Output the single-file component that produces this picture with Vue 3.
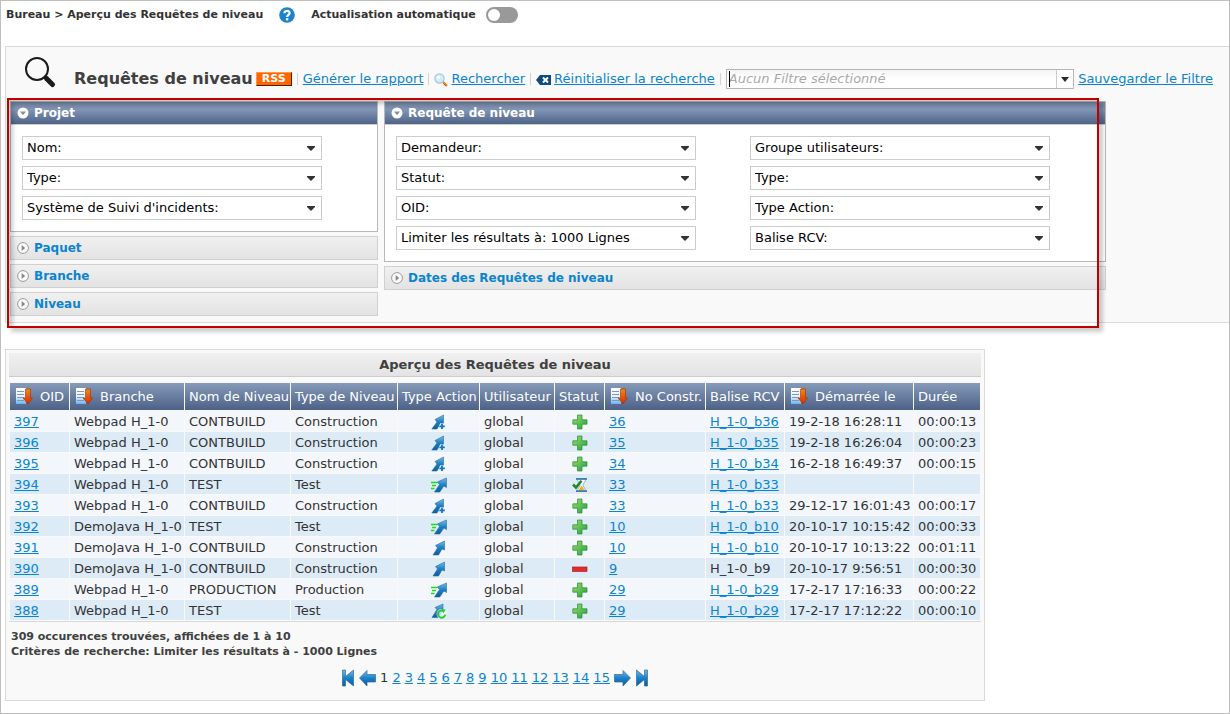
<script setup>
import { ref } from 'vue'

const autoRefresh = ref(false)
const filterName = ref('')

const projectFields = ['Nom:', 'Type:', "Système de Suivi d'incidents:"]
const requestFields = [
  'Demandeur:', 'Groupe utilisateurs:',
  'Statut:', 'Type:',
  'OID:', 'Type Action:',
  'Limiter les résultats à: 1000 Lignes', 'Balise RCV:'
]
const leftSections = ['Paquet', 'Branche', 'Niveau']

const columns = [
  { key: 'oid', label: 'OID', sort: true },
  { key: 'branch', label: 'Branche', sort: true },
  { key: 'level', label: 'Nom de Niveau' },
  { key: 'kind', label: 'Type de Niveau' },
  { key: 'action', label: 'Type Action' },
  { key: 'user', label: 'Utilisateur' },
  { key: 'status', label: 'Statut' },
  { key: 'build', label: 'No Constr.', sort: true },
  { key: 'tag', label: 'Balise RCV' },
  { key: 'start', label: 'Démarrée le', sort: true },
  { key: 'time', label: 'Durée' }
]

const rows = [
  [397, 'Webpad H_1-0', 'CONTBUILD', 'Construction', 'plus', 'ok', 36, 'H_1-0_b36', '19-2-18 16:28:11', '00:00:13'],
  [396, 'Webpad H_1-0', 'CONTBUILD', 'Construction', 'plus', 'ok', 35, 'H_1-0_b35', '19-2-18 16:26:04', '00:00:23'],
  [395, 'Webpad H_1-0', 'CONTBUILD', 'Construction', 'plus', 'ok', 34, 'H_1-0_b34', '16-2-18 16:49:37', '00:00:15'],
  [394, 'Webpad H_1-0', 'TEST', 'Test', 'fast', 'wait', 33, 'H_1-0_b33', '', ''],
  [393, 'Webpad H_1-0', 'CONTBUILD', 'Construction', 'plus', 'ok', 33, 'H_1-0_b33', '29-12-17 16:01:43', '00:00:17'],
  [392, 'DemoJava H_1-0', 'TEST', 'Test', 'fast', 'ok', 10, 'H_1-0_b10', '20-10-17 10:15:42', '00:00:33'],
  [391, 'DemoJava H_1-0', 'CONTBUILD', 'Construction', 'none', 'ok', 10, 'H_1-0_b10', '20-10-17 10:13:22', '00:01:11'],
  [390, 'DemoJava H_1-0', 'CONTBUILD', 'Construction', 'none', 'fail', 9, 'H_1-0_b9', '20-10-17 9:56:51', '00:00:30'],
  [389, 'Webpad H_1-0', 'PRODUCTION', 'Production', 'fast', 'ok', 29, 'H_1-0_b29', '17-2-17 17:16:33', '00:00:22'],
  [388, 'Webpad H_1-0', 'TEST', 'Test', 'redo', 'ok', 29, 'H_1-0_b29', '17-2-17 17:12:22', '00:00:10']
].map(([oid, branch, level, kind, action, status, build, tag, start, time]) => ({
  oid, branch, level, kind, action, status, build, tag, start, time, tagLink: status !== 'fail'
}))

const otherPages = Array.from({ length: 14 }, (_, i) => i + 2)
</script>

<template>
  <div class="page">
    <svg class="defs" width="0" height="0" aria-hidden="true">
      <defs>
        <linearGradient id="blue" x1="0" y1="0" x2="0" y2="1">
          <stop offset="0" stop-color="#7cb9e2" /><stop offset="0.5" stop-color="#1a80c6" /><stop offset="1" stop-color="#0d5c9e" />
        </linearGradient>
        <linearGradient id="green" x1="0" y1="0" x2="1" y2="1">
          <stop offset="0" stop-color="#a6d96a" /><stop offset="1" stop-color="#17a63e" />
        </linearGradient>
        <linearGradient id="orange" x1="0" y1="0" x2="0" y2="1">
          <stop offset="0" stop-color="#f08a12" /><stop offset="1" stop-color="#d92a05" />
        </linearGradient>
        <linearGradient id="sheet" x1="0" y1="0" x2="0" y2="1">
          <stop offset="0" stop-color="#ffffff" /><stop offset="0.55" stop-color="#e4f1fd" /><stop offset="1" stop-color="#62b4f4" />
        </linearGradient>
      </defs>
    </svg>

    <header class="topbar">
      <span>Bureau &gt; Aperçu des Requêtes de niveau</span>
      <svg class="help" width="16" height="16" viewBox="0 0 16 16" role="img" aria-label="Aide">
        <circle cx="8" cy="8" r="7.8" fill="#1c82cb" />
        <path d="M5.4 6.2C5.4 3 10.8 3 10.6 6.1 10.5 7.9 8.1 8 8.1 10" fill="none" stroke="#fff" stroke-width="2.2" />
        <rect x="6.9" y="11.2" width="2.4" height="2.2" fill="#fff" />
      </svg>
      <label class="auto">Actualisation automatique
        <input v-model="autoRefresh" class="switch" type="checkbox">
      </label>
    </header>

    <section class="search">
      <div class="heading">
        <svg class="glass" width="32" height="32" viewBox="0 0 32 32" aria-hidden="true">
          <circle cx="12" cy="12" r="11" fill="none" stroke="#1d1b19" stroke-width="2" />
          <path d="M19 19.5L23 23" stroke="#1d1b19" stroke-width="3" />
          <path d="M21.5 21.5L27.5 27.5" stroke="#1d1b19" stroke-width="5" stroke-linecap="round" />
        </svg>
        <h1>Requêtes de niveau</h1>
        <a class="rss" href="#">RSS</a>
        <i class="bar"></i>
        <a href="#">Générer le rapport</a>
        <i class="bar"></i>
        <a class="withicon" href="#">
          <svg width="14" height="14" viewBox="0 0 14 14" aria-hidden="true">
            <path d="M8.5 8.5L13 13" stroke="#f08a1a" stroke-width="2.4" />
            <path d="M9.5 10.5L12 13" stroke="#c8451a" stroke-width="1" />
            <circle cx="5.5" cy="5.5" r="4.6" fill="#d3ecfa" stroke="#9fc6e0" stroke-width="1.2" />
            <circle cx="4.4" cy="4.2" r="1.8" fill="#fff" />
          </svg>Rechercher</a>
        <i class="bar"></i>
        <a class="withicon" href="#">
          <svg width="15" height="14" viewBox="0 0 15 14" aria-hidden="true">
            <path d="M0 7L4 2H15V12H4Z" fill="#0f4a80" />
            <path d="M7 4.5L12 9.5M12 4.5L7 9.5" stroke="#fff" stroke-width="2" />
          </svg>Réinitialiser la recherche</a>
        <i class="bar"></i>
        <div class="combo">
          <input v-model="filterName" type="text" placeholder="Aucun Filtre sélectionné" aria-label="Filtre">
          <i class="caret"></i>
          <button type="button" aria-label="Ouvrir la liste des filtres">
            <svg width="8" height="5" viewBox="0 0 8 5"><path d="M0 0H8L4 5Z" fill="#2b2b2b" /></svg>
          </button>
        </div>
        <a class="save" href="#">Sauvegarder le Filtre</a>
      </div>

      <div class="criteria">
        <div class="stack">
          <section class="panel">
            <h2><button type="button" class="open">
              <svg width="12" height="12" viewBox="0 0 12 12" aria-hidden="true"><circle cx="6" cy="6" r="5.5" fill="#fff" /><path d="M3 4.5H9L6 8.3Z" fill="#8a8f98" /></svg>Projet</button></h2>
            <div class="fields">
              <div v-for="f in projectFields" :key="f" class="field">
                <select :aria-label="f"><option>{{ f }}</option></select>
                <svg width="8" height="5" viewBox="0 0 8 5" aria-hidden="true"><path d="M0 0H8V1L4 5L0 1Z" fill="#333" /></svg>
              </div>
            </div>
          </section>
          <button v-for="s in leftSections" :key="s" type="button" class="closed">
            <svg width="12" height="12" viewBox="0 0 12 12" aria-hidden="true"><circle cx="6" cy="6" r="5.4" fill="#fafafa" stroke="#999" /><path d="M4.6 3L8.2 6L4.6 9Z" fill="#888" /></svg>{{ s }}
          </button>
        </div>
        <div class="stack">
          <section class="panel">
            <h2><button type="button" class="open">
              <svg width="12" height="12" viewBox="0 0 12 12" aria-hidden="true"><circle cx="6" cy="6" r="5.5" fill="#fff" /><path d="M3 4.5H9L6 8.3Z" fill="#8a8f98" /></svg>Requête de niveau</button></h2>
            <div class="fields two">
              <div v-for="f in requestFields" :key="f" class="field">
                <select :aria-label="f"><option>{{ f }}</option></select>
                <svg width="8" height="5" viewBox="0 0 8 5" aria-hidden="true"><path d="M0 0H8V1L4 5L0 1Z" fill="#333" /></svg>
              </div>
            </div>
          </section>
          <button type="button" class="closed">
            <svg width="12" height="12" viewBox="0 0 12 12" aria-hidden="true"><circle cx="6" cy="6" r="5.4" fill="#fafafa" stroke="#999" /><path d="M4.6 3L8.2 6L4.6 9Z" fill="#888" /></svg>Dates des Requêtes de niveau
          </button>
        </div>
        <div class="highlight"></div>
      </div>
    </section>

    <section class="results">
      <h2 class="caption">Aperçu des Requêtes de niveau</h2>
      <table>
        <colgroup><col v-for="c in columns" :key="c.key" :class="'c-' + c.key"></colgroup>
        <thead>
          <tr>
            <th v-for="c in columns" :key="c.key" scope="col">
              <div class="th">
                <svg v-if="c.sort" width="17" height="17" viewBox="0 0 17 17" aria-hidden="true">
                  <rect width="10" height="16" fill="url(#sheet)" />
                  <path d="M1 3.5H8M1 6.5H8M1 9.5H8M1 12.5H8" stroke="#8097b8" />
                  <path d="M9.5 1H14.5V10H16.5L12 16L7 10H9.5Z" fill="url(#orange)" stroke="#9c3205" stroke-width="0.6" />
                </svg>{{ c.label }}
              </div>
            </th>
          </tr>
        </thead>
        <tbody>
          <tr v-for="r in rows" :key="r.oid">
            <td><a href="#">{{ r.oid }}</a></td>
            <td>{{ r.branch }}</td>
            <td>{{ r.level }}</td>
            <td>{{ r.kind }}</td>
            <td class="icon">
              <svg width="16" height="16" viewBox="0 0 16 16" role="img" :aria-label="r.action">
                <g v-if="r.action === 'fast'">
                  <path d="M3.5 15L8.5 7.5L6.2 5L15.5 1V10.5L12.8 9L8.8 15Z" fill="url(#blue)" stroke="#2d6ca5" stroke-width="0.6" />
                  <path d="M0 5.5H6M1 8.5H5M0 11.5H3.5" stroke="#22d822" stroke-width="1.5" />
                </g>
                <g v-else-if="r.action === 'redo'">
                  <path d="M1 14.5L6 6.5L4 4.5L12 1V8L7 14.5Z" fill="url(#blue)" stroke="#2d6ca5" stroke-width="0.6" />
                  <circle cx="10.5" cy="11" r="5" fill="#fff" opacity="0.7" />
                  <path d="M12.5 8A3.6 3.6 0 1 0 14.2 11.5" fill="none" stroke="#25cc35" stroke-width="2" />
                  <path d="M10.5 6L14.5 6.5L12.5 10.5Z" fill="#25cc35" />
                </g>
                <g v-else-if="r.action === 'plus'">
                  <path d="M0.8 15L6 8L4 5.5L12.5 1V9.5L9.5 9L6 15Z" fill="url(#blue)" stroke="#2d6ca5" stroke-width="0.6" />
                  <path d="M11 9V15.4M8 12.2H14.2" stroke="#e6f0f9" stroke-width="3" />
                  <path d="M11 9.6V15M8.4 12.3H13.8" stroke="#1774bb" stroke-width="1.8" />
                </g>
                <path v-else d="M2 15L6.5 8L4.5 5.5L13.5 1V10L11 9L7.5 15Z" fill="url(#blue)" stroke="#2d6ca5" stroke-width="0.6" />
              </svg>
            </td>
            <td>global</td>
            <td class="icon">
              <svg width="16" height="16" viewBox="0 0 16 16" role="img" :aria-label="r.status">
                <path v-if="r.status === 'ok'" d="M5.5 1H10V5.8H15V10.2H10V15H5.5V10.2H0.8V5.8H5.5Z" fill="url(#green)" stroke="#2a8a38" stroke-width="0.7" />
                <rect v-else-if="r.status === 'fail'" x="0.5" y="6" width="14.5" height="4.4" fill="#e52a2a" stroke="#a82020" stroke-width="0.7" />
                <g v-else>
                  <path d="M5 2.5H14L10.8 8L14 14H5L8.2 8Z" fill="#f7faff" stroke="#8ba6bf" stroke-width="0.8" />
                  <path d="M9.6 8.4L12.6 13.2H6.6Z" fill="#f5ab1c" />
                  <path d="M4 1.8H15M4 14.2H15" stroke="#3f7fa8" stroke-width="1.7" />
                  <path d="M1 7.5L4 10.5L9.5 3.8" fill="none" stroke="#25862c" stroke-width="2.6" />
                </g>
              </svg>
            </td>
            <td><a href="#">{{ r.build }}</a></td>
            <td><a v-if="r.tagLink" href="#">{{ r.tag }}</a><template v-else>{{ r.tag }}</template></td>
            <td>{{ r.start }}</td>
            <td>{{ r.time }}</td>
          </tr>
        </tbody>
      </table>
      <p class="summary">309 occurences trouvées, affichées de 1 à 10<br>Critères de recherche: Limiter les résultats à - 1000 Lignes</p>
      <nav class="pager" aria-label="Pages">
        <a class="first" href="#" aria-label="Première page">
          <svg width="12" height="18" viewBox="0 0 12 18"><path d="M0.5 1H3.5V7.5L11.5 1V17L3.5 10.5V17H0.5Z" fill="url(#blue)" stroke="#2d6ca5" stroke-width="0.7" /></svg>
        </a>
        <a class="prev" href="#" aria-label="Page précédente">
          <svg width="17" height="18" viewBox="0 0 17 18"><path d="M0.5 9L8 1.5V5.5H16.5V13H8V17Z" fill="url(#blue)" stroke="#2d6ca5" stroke-width="0.7" /></svg>
        </a>
        <span>1</span>
        <a v-for="p in otherPages" :key="p" href="#">{{ p }}</a>
        <a class="next" href="#" aria-label="Page suivante">
          <svg width="17" height="18" viewBox="0 0 17 18"><path d="M16.5 9L9 1.5V5.5H0.5V13H9V17Z" fill="url(#blue)" stroke="#2d6ca5" stroke-width="0.7" /></svg>
        </a>
        <a class="last" href="#" aria-label="Dernière page">
          <svg width="12" height="18" viewBox="0 0 12 18"><path d="M11.5 1H8.5V7.5L0.5 1V17L8.5 10.5V17H11.5Z" fill="url(#blue)" stroke="#2d6ca5" stroke-width="0.7" /></svg>
        </a>
      </nav>
    </section>
  </div>
</template>

<style>
body { margin: 0; background: #fff; }
</style>

<style scoped>
.page {
  box-sizing: border-box;
  min-height: 100vh;
  padding-left: 4px;
  border: 1px solid #bfbfbf;
  font: 13px/16px Verdana, "DejaVu Sans", sans-serif;
  color: #333;
}
.defs { display: block; }
a { color: #0a84d0; }
button { font: inherit; cursor: pointer; }

.topbar {
  display: flex;
  align-items: center;
  height: 27px;
  padding-left: 1px;
  font-size: 11px;
  font-weight: bold;
}
.help { margin-left: 16px; }
.auto { display: flex; align-items: center; gap: 10px; margin-left: 16px; }
.switch {
  appearance: none;
  display: flex;
  width: 32px;
  height: 16px;
  margin: 0;
  border-radius: 8px;
  background: #999;
}
.switch::before {
  content: "";
  width: 12px;
  height: 12px;
  margin: 2px;
  border-radius: 50%;
  background: #fff;
}
.switch:checked { justify-content: flex-end; background: #1c82cb; }

.search {
  margin-top: 18px;
  padding: 0 4px 6px;
  border: 1px solid #d9d9d9;
  border-right: 0;
  background: #f9f9f9;
}
.heading {
  display: flex;
  align-items: center;
  height: 44px;
  padding: 10px 12px 0 15px;
  white-space: nowrap;
}
.heading > * { flex: none; }
.glass { align-self: flex-start; }
.heading h1 { margin: 0 3px 0 17px; font-size: 16px; line-height: 22px; color: #404040; }
.rss {
  box-sizing: border-box;
  width: 36px;
  height: 14px;
  border: 1px solid;
  border-color: #ff9a4d #4a2000 #4a2000 #ff9a4d;
  background: #ff6600;
  color: #fff;
  font-size: 11px;
  font-weight: bold;
  line-height: 12px;
  text-align: center;
  text-decoration: none;
}
.bar { width: 1px; height: 12px; margin: 0 5px; background: #d8d0d8; }
.withicon svg { margin-right: 3px; vertical-align: -4px; }
.heading > .combo {
  position: relative;
  box-sizing: border-box;
  display: flex;
  flex: 1 1 0;
  max-width: 350px;
  height: 20px;
  border: 1px solid #b5b5b5;
  background: linear-gradient(#f4f4f4, #fff 50%);
}
.combo input {
  flex: 1;
  min-width: 0;
  padding: 0 2px;
  border: 0;
  outline: 0;
  background: none;
  font: inherit;
  font-style: italic;
}
.combo input::placeholder { color: #a9a9a9; opacity: 1; }
.caret { position: absolute; left: 2px; top: 1px; width: 1px; height: 16px; background: #000; }
.combo button { display: flex; justify-content: center; align-items: center; width: 17px; padding: 0; border: 0; border-left: 1px solid #ccc; background: #fff; }
.save { margin-left: 4px; }

.criteria {
  position: relative;
  display: grid;
  grid-template-columns: 368fr 722fr;
  gap: 6px;
  max-width: 1096px;
}
.stack { display: flex; flex-direction: column; gap: 4px; min-width: 0; }
.panel { border: 1px solid #b8b8b8; background: #fff; }
.panel h2 { margin: 0; font-size: 13px; }
.open, .closed {
  box-sizing: border-box;
  display: flex;
  align-items: center;
  gap: 5px;
  width: 100%;
  font-size: 12px;
  font-weight: bold;
  text-align: left;
}
.open {
  height: 23px;
  padding: 0 6px;
  border: 0;
  border-bottom: 1px solid #ccc;
  background: linear-gradient(#73839f, #8094b5 35%, #4f6388);
  color: #fff;
}
.closed {
  height: 24px;
  padding: 0 6px;
  border: 1px solid #d0d0d0;
  background: linear-gradient(#f0f0f0, #e3e3e3);
  color: #0a84d0;
}
.fields { display: grid; grid-template-columns: minmax(0, 300px); gap: 6px 54px; padding: 11px; }
.fields.two { grid-template-columns: repeat(2, minmax(0, 300px)); }
.field { display: grid; align-items: center; }
.field select, .field svg { grid-area: 1 / 1; }
.field svg { justify-self: end; margin-right: 7px; pointer-events: none; }
.field select {
  appearance: none;
  box-sizing: border-box;
  width: 100%;
  height: 24px;
  padding: 0 20px 0 4px;
  border: 1px solid #ccc;
  border-radius: 0;
  background: #fff;
  color: #000;
  font: inherit;
}
.highlight {
  position: absolute;
  inset: -3px 7px -12px -3px;
  border: 2px solid #c00000;
  box-shadow: 4px 4px 4px rgba(0, 0, 0, 0.2), inset 4px 4px 4px rgba(0, 0, 0, 0.2);
  pointer-events: none;
}

.results {
  box-sizing: border-box;
  width: fit-content;
  margin-top: 26px;
  padding: 3px;
  border: 1px solid #d9d9d9;
  background: #f9f9f9;
}
.caption {
  margin: 0 0 6px;
  height: 23px;
  border-bottom: 1px solid #ccc;
  background: linear-gradient(#f0f0f0, #e3e3e3);
  font-size: 13px;
  line-height: 23px;
  text-align: center;
  color: #404040;
}
table { table-layout: fixed; width: 972px; padding-left: 1px; border-spacing: 0; border-bottom: 1px solid #d9d9d9; }
.c-oid { width: 60px; }
.c-branch { width: 115px; }
.c-level { width: 106px; }
.c-kind { width: 107px; }
.c-action { width: 82px; }
.c-user { width: 75px; }
.c-status { width: 50px; }
.c-build { width: 101px; }
.c-tag { width: 79px; }
.c-start { width: 129px; }
.c-time { width: 67px; }
th, td { padding: 0 4px; border: 0 solid #f9f9f9; border-width: 0 1px 1px 0; text-align: left; white-space: nowrap; }
th { height: 27px; background: linear-gradient(#869ab9, #4c6186); color: #fff; font-weight: normal; }
.th { display: flex; align-items: center; }
.th svg { flex: none; margin: 0 7px 0 2px; }
td { height: 18px; padding-top: 2px; line-height: 18px; background: #f3f7fc; }
tr:nth-child(even) td { background: #ddebf7; }
td.icon { text-align: center; }
td.icon svg { display: block; margin: 0 auto; }
.summary { margin: 7px 2px 0; font-size: 11px; font-weight: bold; line-height: 15px; color: #404040; }
.pager { display: flex; justify-content: center; align-items: center; gap: 4px; margin-top: 10px; height: 18px; padding-bottom: 10px; }
.pager svg { display: block; }
.first { margin-right: 1px; }
.last { margin-left: 1px; }
</style>
